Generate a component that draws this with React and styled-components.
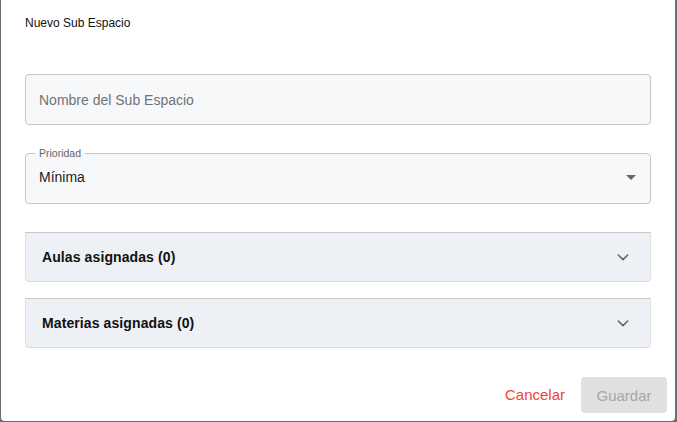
import React from "react";
import styled, { createGlobalStyle } from "styled-components";

const Global = createGlobalStyle`
  html, body { margin: 0; padding: 0; background: #6e6e6e; }
  body { font-family: "Liberation Sans", Arial, sans-serif; }
  * { box-sizing: border-box; }
`;

const Backdrop = styled.div`
  width: 677px;
  height: 422px;
  background: #6e6e6e;
  padding-left: 1px;
`;

const Dialog = styled.div`
  width: 674px;
  height: 421px;
  background: #fff;
  border-radius: 0 0 4px 4px;
  display: flex;
  flex-direction: column;
  padding: 16px 24px 0 24px;
`;

const Title = styled.h2`
  margin: 0;
  font-size: 12px;
  line-height: 14px;
  font-weight: 400;
  color: #111;
`;

const Form = styled.div`
  display: flex;
  flex-direction: column;
  margin-top: 44px;
`;

const Field = styled.div`
  position: relative;
  height: 51px;
  border: 1px solid #c6c6c6;
  border-radius: 4px;
  background: #f7f8fa;
  display: flex;
  align-items: center;
  padding: 0 13px;
  margin-bottom: ${(p) => p.$mb || 0}px;
`;

const Placeholder = styled.span`
  font-size: 14px;
  color: #6f7378;
`;

const Value = styled.span`
  font-size: 14px;
  color: #222;
  flex: 1;
  margin-top: -3px;
`;

const FloatLabel = styled.span`
  position: absolute;
  top: -8px;
  left: 9px;
  padding: 0 4px;
  font-size: 10.5px;
  line-height: 14px;
  color: #666;
  background: linear-gradient(to bottom, #fff 50%, #f7f8fa 50%);
`;

const Caret = styled.span`
  width: 0;
  height: 0;
  border-left: 5px solid transparent;
  border-right: 5px solid transparent;
  border-top: 5px solid #666;
  margin-right: 1px;
  margin-top: -2px;
`;

const Accordion = styled.div`
  height: 50px;
  background: #edf0f4;
  border-top: 1px solid #c9c9c9;
  border-left: 1px solid #e2e2e2;
  border-right: 1px solid #e2e2e2;
  border-bottom: 1px solid #dcdcdc;
  border-radius: 0 0 4px 4px;
  display: flex;
  align-items: center;
  justify-content: space-between;
  padding: 0 19px 0 16px;
  margin-bottom: ${(p) => p.$mb || 0}px;
`;

const AccTitle = styled.span`
  font-size: 14px;
  font-weight: 700;
  color: #111;
  letter-spacing: 0.1px;
`;

const Footer = styled.div`
  margin-top: auto;
  margin-right: -16px;
  height: 44px;
  display: flex;
  justify-content: flex-end;
  align-items: flex-start;
  gap: 8px;
`;

const TextButton = styled.button`
  background: none;
  border: none;
  font-family: inherit;
  font-size: 15px;
  color: #f44336;
  height: 36px;
  padding: 0 8px 2px;
  cursor: pointer;
`;

const FilledButton = styled.button`
  background: #e0e0e0;
  border: none;
  border-radius: 4px;
  font-family: inherit;
  font-size: 15px;
  color: #a6a6a6;
  width: 86px;
  height: 36px;
  padding: 0;
`;

const Chevron = () => (
  <svg width="16" height="16" viewBox="0 0 24 24" fill="none" stroke="#666" strokeWidth="2.4" strokeLinecap="round" strokeLinejoin="round">
    <path d="M5 9l7 7 7-7" />
  </svg>
);

export default function App() {
  return (
    <>
      <Global />
      <Backdrop>
        <Dialog>
          <Title>Nuevo Sub Espacio</Title>
          <Form>
            <Field $mb={28}>
              <Placeholder>Nombre del Sub Espacio</Placeholder>
            </Field>
            <Field $mb={28}>
              <FloatLabel>Prioridad</FloatLabel>
              <Value>Mínima</Value>
              <Caret />
            </Field>
            <Accordion $mb={16}>
              <AccTitle>Aulas asignadas (0)</AccTitle>
              <Chevron />
            </Accordion>
            <Accordion>
              <AccTitle>Materias asignadas (0)</AccTitle>
              <Chevron />
            </Accordion>
          </Form>
          <Footer>
            <TextButton>Cancelar</TextButton>
            <FilledButton>Guardar</FilledButton>
          </Footer>
        </Dialog>
      </Backdrop>
    </>
  );
}
